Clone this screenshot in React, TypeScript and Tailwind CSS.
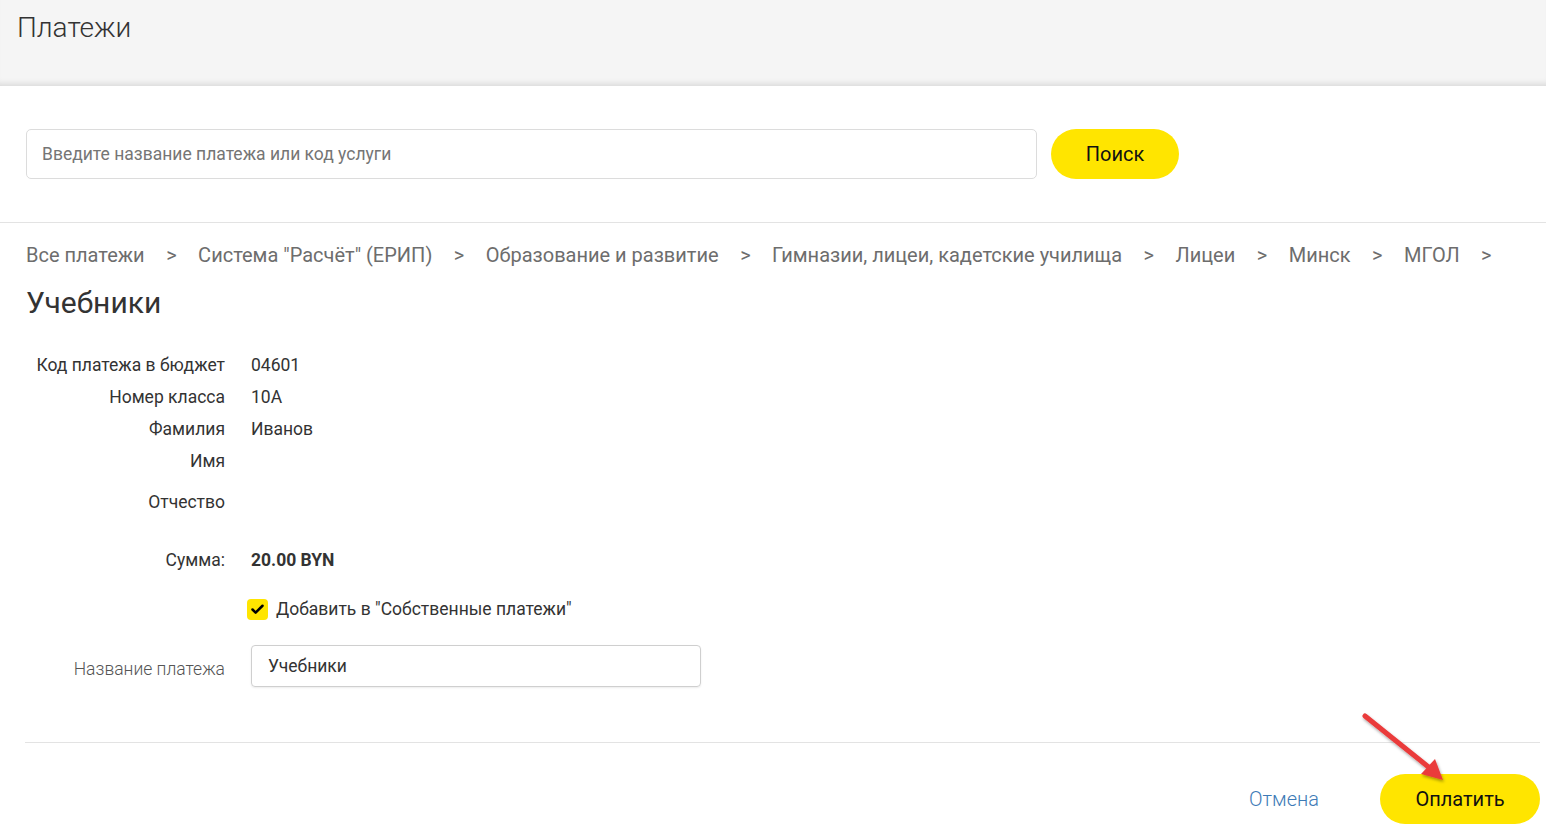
import { Check } from 'lucide-react'

const crumbs = [
  'Все платежи',
  'Система "Расчёт" (ЕРИП)',
  'Образование и развитие',
  'Гимназии, лицеи, кадетские училища',
  'Лицеи',
  'Минск',
  'МГОЛ',
]

const fields = [
  { label: 'Код платежа в бюджет', value: '04601', cls: 'h-[32px]' },
  { label: 'Номер класса', value: '10А', cls: 'h-[32px]' },
  { label: 'Фамилия', value: 'Иванов', cls: 'h-[32px]' },
  { label: 'Имя', value: '', cls: 'h-[32px] mb-[9px]' },
  { label: 'Отчество', value: '', cls: 'h-[32px]' },
]

export default function App() {
  return (
    <div className="relative min-h-screen bg-white font-['Roboto',sans-serif] text-[#333]">
      {/* Page header */}
      <div className="h-[86px] bg-[#f5f5f5] px-[17px] pt-[8px] shadow-[inset_0_-7px_6px_-5px_rgba(0,0,0,0.12)]">
        <h1 className="text-[28px] font-light leading-[40px] text-[#333]">Платежи</h1>
      </div>

      {/* Search */}
      <div className="flex items-center gap-[14px] border-b border-[#e3e3e3] px-[26px] pb-[43px] pt-[43px]">
        <div className="flex h-[50px] w-[1011px] items-center rounded-[5px] border border-[#dcdcdc] px-[15px] text-[17.5px] text-[#757575]">
          Введите название платежа или код услуги
        </div>
        <button className="h-[50px] w-[128px] rounded-full bg-[#ffe500] text-[20px] text-[#111]">Поиск</button>
      </div>

      {/* Breadcrumbs */}
      <div className="flex items-center px-[26px] pt-[20px] text-[20px] leading-[24px] text-[#6d6d6d]">
        {crumbs.map((c) => (
          <div key={c} className="flex items-center">
            <span>{c}</span>
            <span className="mx-[21.5px] text-[20px]">&gt;</span>
          </div>
        ))}
      </div>

      <h2 className="px-[26px] pt-[18px] text-[30px] leading-[36px] text-[#333]">Учебники</h2>

      {/* Details */}
      <div className="mt-[28px] text-[17.5px] text-[#333]">
        {fields.map((f) => (
          <div key={f.label} className={`flex items-center ${f.cls}`}>
            <div className="w-[225px] text-right">{f.label}</div>
            <div className="ml-[26px]">{f.value}</div>
          </div>
        ))}
        <div className="mt-[26px] flex h-[32px] items-center">
          <div className="w-[225px] text-right">Сумма:</div>
          <div className="ml-[26px] font-bold">20.00 BYN</div>
        </div>
        <div className="mt-[17px] flex h-[32px] items-center pl-[247px]">
          <span className="flex h-[21px] w-[21px] items-center justify-center rounded-[4px] bg-[#ffe500]">
            <Check size={15} strokeWidth={4} className="text-black" />
          </span>
          <span className="ml-[8px]">Добавить в "Собственные платежи"</span>
        </div>
        <div className="mt-[20px] flex items-center">
          <div className="w-[225px] pt-[6px] text-right font-light text-[#555]">Название платежа</div>
          <div className="ml-[26px] flex h-[42px] w-[450px] items-center rounded-[4px] border border-[#cfcfcf] px-[16px] shadow-[0_1px_2px_rgba(0,0,0,0.08)]">
            Учебники
          </div>
        </div>
      </div>

      {/* Footer */}
      <div className="ml-[25px] mr-[6px] mt-[55px] border-t border-[#e3e3e3]" />
      <div className="flex items-center justify-end pr-[6px] pt-[31px]">
        <span className="mr-[61px] text-[20px] font-light text-[#3d7ab6]">Отмена</span>
        <button className="h-[50px] w-[160px] rounded-full bg-[#ffe500] text-[20px] text-[#111]">Оплатить</button>
      </div>

      {/* Annotation arrow */}
      <svg className="absolute left-[1355px] top-[706px]" width="100" height="85" viewBox="0 0 100 85">
        <defs>
          <filter id="sh" x="-20%" y="-20%" width="140%" height="140%">
            <feDropShadow dx="1" dy="2" stdDeviation="1.5" floodColor="#000" floodOpacity="0.35" />
          </filter>
        </defs>
        <g filter="url(#sh)">
          <line x1="10" y1="10" x2="76" y2="63" stroke="#ea3b3b" strokeWidth="5" strokeLinecap="round" />
          <polygon points="88,74 66,68 80,53" fill="#ea3b3b" />
        </g>
      </svg>
    </div>
  )
}
